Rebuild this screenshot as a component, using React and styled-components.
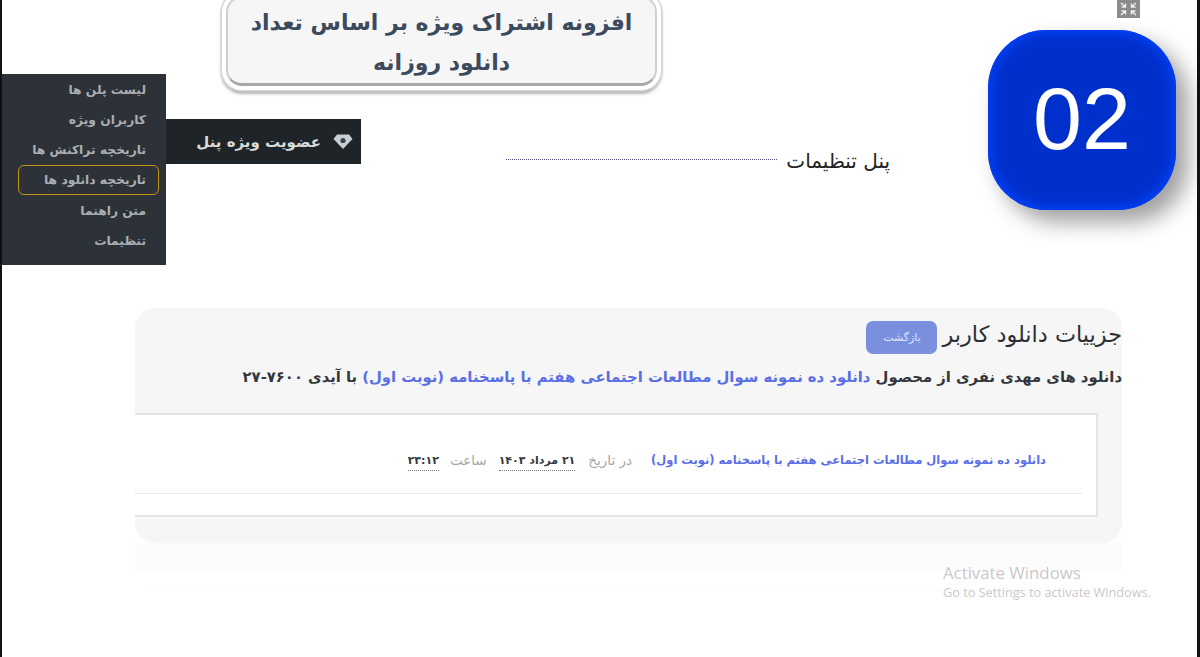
import React from "react";
import styled, { createGlobalStyle } from "styled-components";

const GlobalStyle = createGlobalStyle`
  html, body {
    margin: 0;
    padding: 0;
    background: #fff;
  }
  * {
    box-sizing: border-box;
  }
`;

const Slide = styled.div`
  position: relative;
  width: 1200px;
  height: 657px;
  overflow: hidden;
  background: #fff;
  border-left: 2px solid #111;
  border-right: 3px solid #111;
  font-family: "DejaVu Sans", "Noto Sans", sans-serif;
`;

const TopRow = styled.div`
  display: flex;
  align-items: flex-start;
  height: 308px;
`;

const MenuCluster = styled.div`
  display: flex;
  align-items: flex-start;
  flex: none;
  width: 359px;
  margin-top: 74px;
`;

const Menu = styled.ul`
  direction: rtl;
  width: 164px;
  height: 191px;
  margin: 0;
  padding: 1px 7px 0;
  list-style: none;
  background: #2c3238;
`;

const MenuItem = styled.li`
  height: 30px;
  margin-left: ${(p) => (p.$active ? "9px" : "0")};
  padding-right: 12px;
  line-height: 28px;
  font-size: 12.3px;
  font-weight: 700;
  color: #abaeb2;
  white-space: nowrap;
  border: 1.5px solid ${(p) => (p.$active ? "#c4940f" : "transparent")};
  border-radius: 6px;

  &:nth-child(5) {
    margin-top: 1px;
  }
`;

const PanelHeader = styled.div`
  direction: rtl;
  display: flex;
  align-items: center;
  gap: 12px;
  width: 195px;
  height: 45px;
  margin-top: 45px;
  padding: 0 8px;
  background: #1f2428;
  color: #d9dadb;
  font-size: 15px;
  font-weight: 700;
  white-space: nowrap;
`;

const MiddleColumn = styled.div`
  flex: none;
  width: 664px;
  margin-left: -135px;
`;

const Heading = styled.h1`
  direction: rtl;
  width: 431px;
  height: 90px;
  margin: -4px 0 0;
  padding: 5px 0 0;
  text-align: center;
  font-size: 22px;
  line-height: 40px;
  font-weight: 700;
  color: #3c4a5e;
  background: #f6f6f7;
  border: 2px solid #d0d0d0;
  border-bottom: 3px solid #a8a8a8;
  border-radius: 16px;
  box-shadow: 0 0 0 4px #fff, 0 0 0 5.5px #d6d6d6, 0 3px 3px 5px #b4b4b4;
`;

const Callout = styled.div`
  direction: rtl;
  display: flex;
  align-items: center;
  gap: 9px;
  margin-top: 63px;
  font-size: 20px;
  color: #222;
`;

const Leader = styled.span`
  width: 271px;
  margin-top: -4px;
  border-top: 1px dotted #4a4f7c;
`;

const BadgeColumn = styled.div`
  flex: none;
  width: 188px;
  margin-left: 98px;
`;

const CollapseButton = styled.div`
  display: flex;
  align-items: center;
  justify-content: center;
  width: 23px;
  height: 18px;
  margin-left: 129px;
  background: #8b8b8b;
`;

const Badge = styled.div`
  display: flex;
  align-items: center;
  justify-content: center;
  height: 180px;
  margin-top: 12px;
  padding-bottom: 2px;
  border-radius: 58px;
  background: #0030cc;
  box-shadow: inset 0 0 12px 3px #0044ff, 12px 12px 22px rgba(0, 0, 0, 0.38);
  color: #fff;
  font-family: "Liberation Sans", Arial, sans-serif;
  font-size: 88px;
`;

const Card = styled.section`
  direction: rtl;
  width: 987px;
  height: 235px;
  margin-left: 133px;
  padding-top: 12px;
  background: #f6f6f6;
  border-radius: 20px;
`;

const TitleRow = styled.div`
  display: flex;
  align-items: center;
  gap: 5px;
  height: 35px;
`;

const Title = styled.h2`
  margin: 0 0 7px;
  font-size: 22.4px;
  font-weight: 400;
  color: #2b2f33;
  white-space: nowrap;
`;

const BackButton = styled.button`
  width: 71px;
  height: 33px;
  padding: 0;
  border: 0;
  border-radius: 7px;
  background: #7a8fdd;
  color: #dfe5fb;
  font-family: inherit;
  font-size: 11px;
`;

const Summary = styled.p`
  height: 58px;
  margin: 0;
  padding-top: 10px;
  font-size: 14.8px;
  line-height: 24px;
  font-weight: 700;
  color: #33373b;
  white-space: nowrap;
`;

const ProductName = styled.span`
  color: #5a6fe6;
`;

const ListBox = styled.div`
  width: 963px;
  height: 104px;
  margin-right: 24px;
  padding-right: 14px;
  background: #fff;
  border: 2px solid #e4e4e4;
  border-left: 0;
`;

const DownloadRow = styled.div`
  display: flex;
  align-items: center;
  height: 79px;
  padding: 11px 36px 0 0;
  border-bottom: 1px solid #e9e9e9;
  font-size: 11.5px;
  white-space: nowrap;
`;

const RowLink = styled(ProductName)`
  margin-left: 19px;
  font-weight: 700;
`;

const Muted = styled.span`
  margin-left: ${(p) => p.$gap}px;
  font-size: 13.5px;
  color: #a6a6ab;
`;

const Stamp = styled.span`
  margin-left: ${(p) => p.$gap}px;
  margin-top: 5px;
  padding-bottom: 3px;
  font-size: 11px;
  font-weight: 700;
  color: #34383c;
  border-bottom: 1px dotted #70747a;
`;

const Reflection = styled.div`
  width: 987px;
  height: 48px;
  margin-left: 133px;
  border-radius: 0 0 20px 20px;
  background: linear-gradient(#fbfbfb 0, #fcfcfc 27px, #fff 29px, #fff 45px, #fdfdfd 46px, #fdfdfd 47px, #fff 48px);
`;

const Watermark = styled.div`
  position: absolute;
  left: 941px;
  top: 563px;
  font-family: "Open Sans", sans-serif;
  color: #c9c9c9;
  white-space: nowrap;
`;

const WatermarkTitle = styled.div`
  font-size: 16.8px;
  line-height: 20px;
`;

const WatermarkText = styled.div`
  font-size: 12.7px;
  line-height: 19px;
`;

const menuItems = ["لیست پلن ها", "کاربران ویژه", "تاریخچه تراکنش ها", "تاریخچه دانلود ها", "متن راهنما", "تنظیمات"];

function DiamondIcon() {
  return (
    <svg width="20" height="16" viewBox="0 0 20 16">
      <path d="M4 0.5h12l3.5 4.5L10 15 0.5 5z" fill="#c9ced2" />
      <circle cx="10" cy="6.5" r="2.6" fill="#3a4248" />
    </svg>
  );
}

function CollapseIcon() {
  return (
    <svg width="17" height="14" viewBox="0 0 17 14" fill="none" stroke="#f2f2f2" strokeWidth="1.4">
      <path d="M1 1l4 3.5M5.5 1.5v3.5H1.5" />
      <path d="M16 1l-4 3.5M11.5 1.5v3.5h4" />
      <path d="M1 13l4-3.5M5.5 12.5V9H1.5" />
      <path d="M16 13l-4-3.5M11.5 12.5V9h4" />
    </svg>
  );
}

export default function App() {
  const productName = "دانلود ده نمونه سوال مطالعات اجتماعی هفتم با پاسخنامه (نوبت اول)";
  return (
    <Slide>
      <GlobalStyle />
      <TopRow>
        <MenuCluster>
          <Menu>
            {menuItems.map((item, i) => (
              <MenuItem key={item} $active={i === 3}>
                {item}
              </MenuItem>
            ))}
          </Menu>
          <PanelHeader>
            <DiamondIcon />
            عضویت ویژه پنل
          </PanelHeader>
        </MenuCluster>
        <MiddleColumn>
          <Heading>افزونه اشتراک ویژه بر اساس تعداد دانلود روزانه</Heading>
          <Callout>
            پنل تنظیمات
            <Leader />
          </Callout>
        </MiddleColumn>
        <BadgeColumn>
          <CollapseButton>
            <CollapseIcon />
          </CollapseButton>
          <Badge>02</Badge>
        </BadgeColumn>
      </TopRow>
      <Card>
        <TitleRow>
          <Title>جزییات دانلود کاربر</Title>
          <BackButton>بازگشت</BackButton>
        </TitleRow>
        <Summary>
          دانلود های مهدی نفری از محصول <ProductName>{productName}</ProductName> با آیدی ۷۶۰۰-۲۷
        </Summary>
        <ListBox>
          <DownloadRow>
            <RowLink>{productName}</RowLink>
            <Muted $gap={13}>در تاریخ</Muted>
            <Stamp $gap={12}>۲۱ مرداد ۱۴۰۳</Stamp>
            <Muted $gap={11}>ساعت</Muted>
            <Stamp $gap={0}>۲۳:۱۲</Stamp>
          </DownloadRow>
        </ListBox>
      </Card>
      <Reflection />
      <Watermark>
        <WatermarkTitle>Activate Windows</WatermarkTitle>
        <WatermarkText>Go to Settings to activate Windows.</WatermarkText>
      </Watermark>
    </Slide>
  );
}
